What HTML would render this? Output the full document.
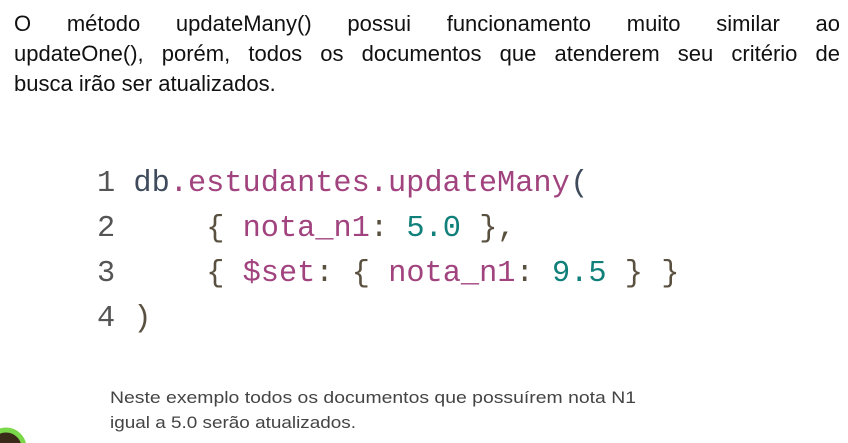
<!DOCTYPE html>
<html><head><meta charset="utf-8"><style>
html,body{margin:0;padding:0;background:#fff;width:848px;height:443px;overflow:hidden}
#t{position:absolute;left:14px;top:9px;width:826px;font-family:"Liberation Sans",sans-serif;font-size:22px;color:#111;line-height:30px}
#t div{white-space:nowrap;text-align:justify;text-align-last:justify}
#t div.l{text-align-last:left}
svg{display:block;position:absolute;left:0;top:0}
</style></head><body>
<svg width="848" height="443" xmlns="http://www.w3.org/2000/svg">
<g font-family="Liberation Mono, monospace" font-size="30.3">
<text y="191"><tspan x="97" fill="#555">1</tspan><tspan x="133.4" fill="#3f4b5c">db</tspan><tspan x="169.8" fill="#a1437e">.estudantes.updateMany</tspan><tspan x="570.2" fill="#3f4b5c">(</tspan></text>
<text y="236"><tspan x="97" fill="#555">2</tspan><tspan x="206.2" fill="#5a5040">{</tspan><tspan x="242.6" fill="#a1437e">nota_n1</tspan><tspan x="370" fill="#5a5040">:</tspan><tspan x="406.4" fill="#12807a">5.0</tspan><tspan x="479.2" fill="#5a5040">},</tspan></text>
<text y="281"><tspan x="97" fill="#555">3</tspan><tspan x="206.2" fill="#5a5040">{</tspan><tspan x="242.6" fill="#a1437e">$set</tspan><tspan x="315.4" fill="#5a5040">:</tspan><tspan x="351.8" fill="#5a5040">{</tspan><tspan x="388.2" fill="#a1437e">nota_n1</tspan><tspan x="515.6" fill="#5a5040">:</tspan><tspan x="552" fill="#12807a">9.5</tspan><tspan x="624.8" fill="#5a5040">}</tspan><tspan x="661.2" fill="#5a5040">}</tspan></text>
<text y="326"><tspan x="97" fill="#555">4</tspan><tspan x="133.4" fill="#5a5040">)</tspan></text>
</g>
<g font-family="Liberation Sans, sans-serif" font-size="17" fill="#444">
<text x="110" y="403" textLength="526" lengthAdjust="spacingAndGlyphs">Neste exemplo todos os documentos que possuírem nota N1</text>
<text x="110" y="428" textLength="246" lengthAdjust="spacingAndGlyphs">igual a 5.0 serão atualizados.</text>
</g>
<circle cx="6" cy="448" r="18" fill="#3a2a1a" stroke="#7bd84a" stroke-width="5"/>
</svg>
<div id="t">
<div>O método updateMany() possui funcionamento muito similar ao</div>
<div>updateOne(), porém, todos os documentos que atenderem seu critério de</div>
<div class="l">busca irão ser atualizados.</div>
</div>
</body></html>
